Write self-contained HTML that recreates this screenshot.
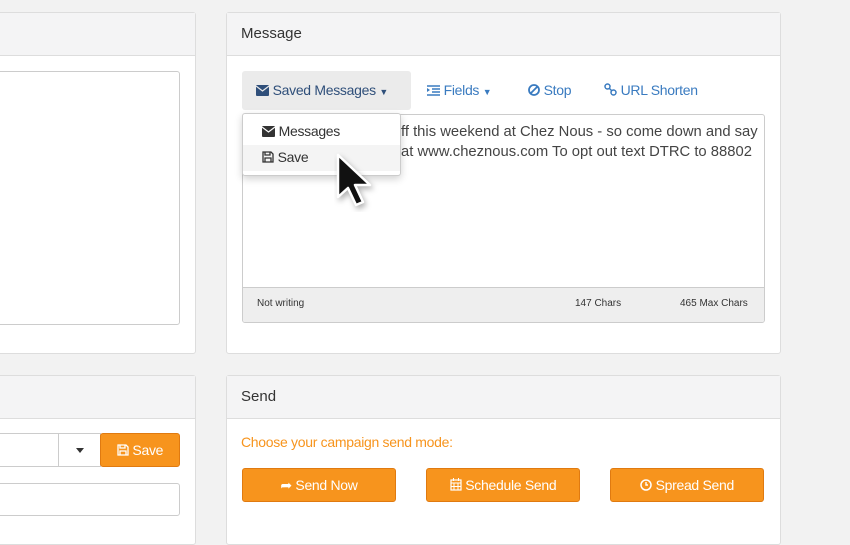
<!DOCTYPE html>
<html><head><style>
body{margin:0;width:850px;height:527px;background:#f2f2f2;font-family:"Liberation Sans",sans-serif;position:relative;overflow:hidden;color:#333}
.p{position:absolute;background:#fff;border:1px solid #ddd;border-radius:3px;box-sizing:border-box}
.h{position:absolute;left:0;right:0;top:0;height:42px;background:#f4f4f5;border-bottom:1px solid #ddd;font-size:15px;color:#333}
.h span{position:absolute;left:14px;top:12px}
.a{position:absolute;font-size:14px;letter-spacing:-0.3px}
.btn{position:absolute;background:#f7941d;border:1px solid #e07a10;border-radius:3px;color:#fff;font-size:14px;text-align:center;line-height:32px;box-sizing:border-box;letter-spacing:-0.3px}
.lk{color:#3a7bc0}
svg.i{vertical-align:-1px}
</style></head><body>
<div class="p" style="left:-5px;top:12px;width:201px;height:342px"><div class="h"></div>
<div style="position:absolute;left:-2px;top:58px;width:184px;height:252px;border:1px solid #ccc;border-radius:3px"></div></div>
<div class="p" style="left:-5px;top:375px;width:201px;height:170px"><div class="h"></div>
<div style="position:absolute;left:-2px;top:57px;width:107px;height:34px;border:1px solid #ccc;border-right:none;border-radius:3px 0 0 3px;box-sizing:border-box"></div>
<div style="position:absolute;left:62px;top:57px;width:43px;height:34px;border:1px solid #ccc;box-sizing:border-box"><div style="position:absolute;left:17px;top:14px;border:4px solid transparent;border-top:5px solid #333;border-bottom:0"></div></div>
</div>
<div class="btn" style="left:100px;top:433px;width:80px;height:34px;line-height:32px"><svg class="i" width="12" height="12" viewBox="0 0 12 12"><path d="M1 1h8l2 2v8H1z M3 1v3h5V1 M3 7h6v4H3z" fill="none" stroke="#fff" stroke-width="1.3"/></svg> Save</div>
<div style="position:absolute;left:-5px;top:483px;width:185px;height:33px;border:1px solid #ccc;border-radius:3px;background:#fff;box-sizing:border-box"></div>

<div class="p" style="left:226px;top:12px;width:555px;height:342px"><div class="h"><span>Message</span></div></div>
<div style="position:absolute;left:242px;top:71px;width:169px;height:39px;background:#ebebeb;border-radius:3px"></div>
<div class="a" style="left:256px;top:82px;color:#2f4f7a"><svg class="i" width="13" height="11" viewBox="0 0 13 11"><rect x="0" y="0" width="13" height="11" rx="1" fill="#2f4f7a"/><path d="M0 1l6.5 5L13 1" fill="none" stroke="#ebebeb" stroke-width="1.2"/></svg> Saved Messages <span style="font-size:9px">&#9660;</span></div>
<div class="a lk" style="left:427px;top:82px"><svg class="i" width="13" height="11" viewBox="0 0 13 11"><path d="M0 1h13M5 4h8M5 7h8M0 10h13" stroke="#3a7bc0" stroke-width="1.6"/><path d="M0 3l3 2-3 2z" fill="#3a7bc0"/></svg> Fields <span style="font-size:9px">&#9660;</span></div>
<div class="a lk" style="left:528px;top:82px"><svg class="i" width="12" height="12" viewBox="0 0 12 12"><circle cx="6" cy="6" r="5" fill="none" stroke="#3a7bc0" stroke-width="1.8"/><path d="M2.5 9.5l7-7" stroke="#3a7bc0" stroke-width="1.8"/></svg> Stop</div>
<div class="a lk" style="left:604px;top:82px"><svg class="i" width="13" height="13" viewBox="0 0 13 13"><rect x="1" y="1" width="5" height="5" rx="2.5" fill="none" stroke="#3a7bc0" stroke-width="1.5"/><rect x="7" y="7" width="5" height="5" rx="2.5" fill="none" stroke="#3a7bc0" stroke-width="1.5"/><path d="M5 5l3 3" stroke="#3a7bc0" stroke-width="1.5"/></svg> URL Shorten</div>
<div style="position:absolute;left:242px;top:114px;width:523px;height:209px;border:1px solid #ccc;border-radius:3px;box-sizing:border-box;overflow:hidden;background:#fff">
<div style="position:absolute;left:0;right:0;bottom:0;height:34px;background:#eee;border-top:1px solid #ccc;font-size:10px">
<span style="position:absolute;left:14px;top:10px">Not writing</span><span style="position:absolute;left:332px;top:10px">147 Chars</span><span style="position:absolute;left:437px;top:10px">465 Max Chars</span></div></div>
<div style="position:absolute;left:401px;top:122px;line-height:20px;color:#444;font-size:14.8px;white-space:nowrap">ff this weekend at Chez Nous - so come down and say<br>at www.cheznous.com To opt out text DTRC to 88802</div>
<div style="position:absolute;left:242px;top:113px;width:159px;height:63px;background:#fff;border:1px solid #ccc;border-radius:3px;box-shadow:0 3px 8px rgba(0,0,0,.18);box-sizing:border-box">
<div style="position:absolute;left:0;right:0;top:31px;height:26px;background:#f4f4f4"></div>
<div class="a" style="left:19px;top:9px;color:#333"><svg class="i" width="13" height="11" viewBox="0 0 13 11"><rect width="13" height="11" rx="1" fill="#333"/><path d="M0 1l6.5 5L13 1" fill="none" stroke="#fff" stroke-width="1.2"/></svg> Messages</div>
<div class="a" style="left:19px;top:35px;color:#333"><svg class="i" width="12" height="12" viewBox="0 0 12 12"><path d="M1 1h8l2 2v8H1z M3 1v3h5V1 M3 7h6v4H3z" fill="none" stroke="#333" stroke-width="1.3"/></svg> Save</div></div>
<svg style="position:absolute;left:334px;top:152px" width="46" height="60" viewBox="0 0 46 60"><path d="M4 3 L4 45 L14 36 L22 53 L29 50 L21 33 L36 33 Z" fill="#111" stroke="#fff" stroke-width="2.5" stroke-linejoin="round" style="filter:drop-shadow(2px 3px 3px rgba(0,0,0,.3))"/></svg>

<div class="p" style="left:226px;top:375px;width:555px;height:170px"><div class="h"><span>Send</span></div></div>
<div class="a" style="left:241px;top:434px;color:#f7941d">Choose your campaign send mode:</div>
<div class="btn" style="left:242px;top:468px;width:154px;height:34px">&#10150; Send Now</div>
<div class="btn" style="left:426px;top:468px;width:154px;height:34px"><svg class="i" width="12" height="13" viewBox="0 0 12 13"><rect x="1" y="2" width="10" height="10" fill="none" stroke="#fff" stroke-width="1.2"/><path d="M1 5h10M4 5v7M8 5v7M1 8.5h10M3.5 0v3M8.5 0v3" stroke="#fff" stroke-width="1"/></svg> Schedule Send</div>
<div class="btn" style="left:610px;top:468px;width:154px;height:34px"><svg class="i" width="12" height="12" viewBox="0 0 12 12"><circle cx="6" cy="6" r="5" fill="none" stroke="#fff" stroke-width="1.5"/><path d="M6 3v3h2" fill="none" stroke="#fff" stroke-width="1.4"/></svg> Spread Send</div>
</body></html>
